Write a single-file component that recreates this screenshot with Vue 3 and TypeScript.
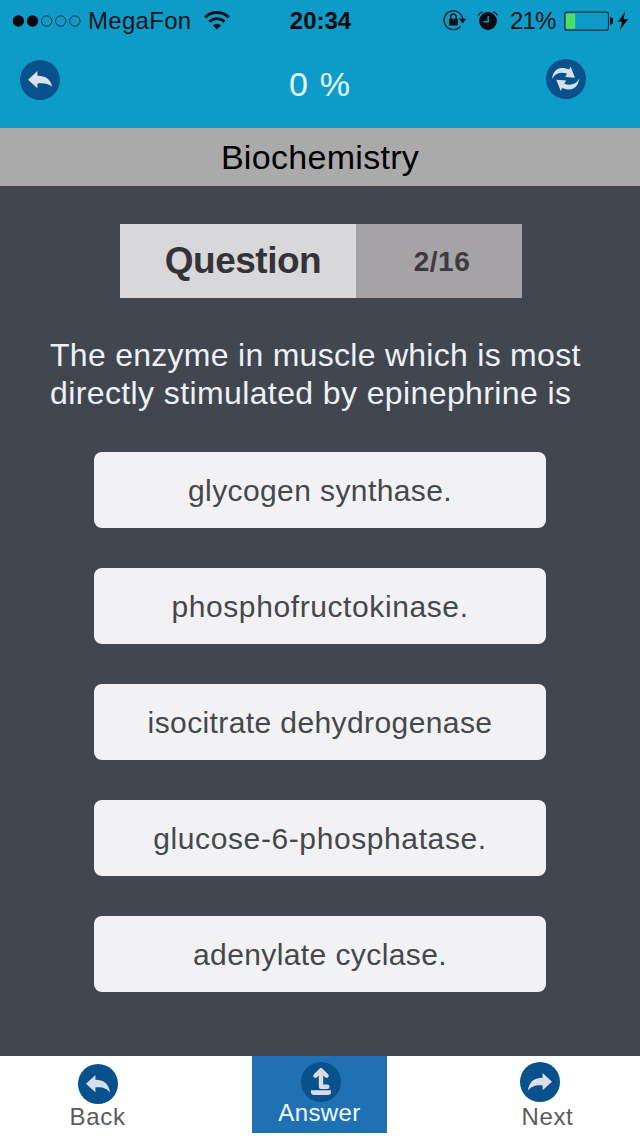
<script setup lang="ts">
interface Choice {
  text: string
  tracking: string
}

const signal: boolean[] = [true, true, false, false, false]

const choices: Choice[] = [
  { text: 'glycogen synthase.', tracking: 't-mid' },
  { text: 'phosphofructokinase.', tracking: 't-wide' },
  { text: 'isocitrate dehydrogenase', tracking: 't-mid' },
  { text: 'glucose-6-phosphatase.', tracking: 't-wide' },
  { text: 'adenylate cyclase.', tracking: 't-mid' },
]
</script>

<template>
  <div class="screen">
    <header class="top">
      <div class="status">
        <div class="status-left">
          <svg class="dots" width="70" height="14" viewBox="0 0 70 14">
            <circle
              v-for="(on, i) in signal"
              :key="i"
              :cx="6.4 + i * 14.1"
              cy="7"
              :r="on ? 5.7 : 5.2"
              :fill="on ? '#03090c' : 'none'"
              :stroke="on ? 'none' : '#052f40'"
              stroke-width="1"
            />
          </svg>
          <span class="carrier">MegaFon</span>
          <svg width="26" height="20" viewBox="0 0 26 20" fill="none" stroke="#03141b">
            <path d="M1.2 6.4A16.8 16.8 0 0 1 24.8 6.4" stroke-width="3" />
            <path d="M5.4 10.7A10.8 10.8 0 0 1 20.6 10.7" stroke-width="2.8" />
            <path d="M13 18.6L8.9 14.5A5.8 5.8 0 0 1 17.1 14.5Z" fill="#03141b" stroke="none" />
          </svg>
        </div>
        <span class="clock">20:34</span>
        <div class="status-right">
          <svg class="lock" width="24" height="22" viewBox="0 0 24 22">
            <path d="M17.6 16.2A9.4 9.4 0 1 1 19.7 9" fill="none" stroke="#042b3a" stroke-width="1.5" />
            <path d="M15.8 8.8H23.4L19.7 13.6Z" fill="#03141b" />
            <rect x="6" y="8.8" width="9" height="6.7" rx=".7" fill="#03141b" />
            <path d="M7.7 9.2V6.9a2.8 2.8 0 0 1 5.6 0V9.2" fill="none" stroke="#03141b" stroke-width="1.5" />
          </svg>
          <svg class="alarm" width="20" height="20" viewBox="0 0 20 20">
            <circle cx="10" cy="10" r="8.9" fill="#03090c" />
            <path d="M10.2 5V10.8H5.4" fill="none" stroke="#0e9ac8" stroke-width="1.5" />
            <path d="M.7 4.6Q1.6 1.7 4.7 .7M19.3 4.6Q18.4 1.7 15.3 .7" fill="none" stroke="#03141b" stroke-width="1.3" />
          </svg>
          <span class="charge">21%</span>
          <svg class="battery" width="66" height="22" viewBox="0 0 66 22">
            <rect x=".7" y="2.1" width="43.8" height="18" rx="2.2" fill="none" stroke="#063243" stroke-width="1.2" />
            <rect x="2" y="3.4" width="9.2" height="15.4" rx=".8" fill="#4fdd68" />
            <path d="M46 7.5h1.2a2 2 0 0 1 1.8 2v3a2 2 0 0 1-1.8 2H46z" fill="#03141b" />
            <path d="M61.2 1.4L54 11.8h4.1L55.8 20.2L64 9.3h-4.5z" fill="#03090c" />
          </svg>
        </div>
      </div>
      <div class="bar">
        <svg class="disc" width="40" height="40" viewBox="0 0 40 40">
          <circle cx="20" cy="20" r="20" fill="#08518c" />
          <path d="M8 19.7L17.4 11V15.8C25.5 15.8 31.2 19.7 32 26.8C28.2 23.4 23.5 23 17.4 23.5V28.2Z" fill="#dbe2eb" />
        </svg>
        <span class="percent">0 %</span>
        <svg class="disc refresh" width="40" height="40" viewBox="0 0 40 40">
          <circle cx="20" cy="20" r="20" fill="#08518c" />
          <path d="M6 19.9C7 12.5 10.8 9 16 9C18.8 9 21 9.7 23.2 10.6L24.6 7.5L29 18.8L19.2 18L21.1 14.8C14.5 12.4 9.4 13.9 6 19.9Z" fill="#d4e1eb" />
          <path d="M33.3 19.6C32.2 27 28.4 30.4 23.2 30.4C20.6 30.4 18.4 29.8 16.2 28.9L14.8 32L10.2 20.7L20.2 21.5L18.2 24.8C24.6 27.1 29.9 25.6 33.3 19.6Z" fill="#d4e1eb" />
        </svg>
      </div>
    </header>

    <div class="subject">Biochemistry</div>

    <main class="quiz">
      <div class="counter">
        <div class="counter-label">Question</div>
        <div class="counter-value">2/16</div>
      </div>
      <p class="prompt">
        <span class="line-a">The enzyme in muscle which is most</span><br />
        <span class="line-b">directly stimulated by epinephrine is</span>
      </p>
      <div class="choices">
        <button v-for="c in choices" :key="c.text" class="choice" :class="c.tracking">{{ c.text }}</button>
      </div>
    </main>

    <nav class="tabs">
      <div class="tab back">
        <svg width="40" height="40" viewBox="0 0 40 40">
          <circle cx="20" cy="20" r="20" fill="#08518c" />
          <path d="M8 19.7L17.4 11V15.8C25.5 15.8 31.2 19.7 32 28.8C28.2 23.8 23.5 23 17.4 23.5V28.2Z" fill="#d5dfeb" />
        </svg>
        <span>Back</span>
      </div>
      <div class="tab answer">
        <svg width="40" height="40" viewBox="0 0 40 40">
          <circle cx="20" cy="20" r="20" fill="#08518c" />
          <path d="M14.4 13.7L20 8.2L25.6 13.7M20 9V24.7H26.3" fill="none" stroke="#d9dce6" stroke-width="4.4" stroke-linejoin="round" stroke-linecap="round" />
          <path d="M10 28.3H30V30a3 3 0 0 1-3 3H13a3 3 0 0 1-3-3Z" fill="#d9dce6" />
        </svg>
        <span>Answer</span>
      </div>
      <div class="tab next">
        <svg width="40" height="40" viewBox="0 0 40 40">
          <circle cx="20" cy="20" r="20" fill="#08518c" />
          <path d="M32 19.7L22.6 11V15.8C14.5 15.8 8.8 19.7 8 28.8C11.8 23.8 16.5 23 22.6 23.5V28.2Z" fill="#dbe0e8" />
        </svg>
        <span>Next</span>
      </div>
    </nav>
  </div>
</template>

<style scoped>
.screen {
  width: 640px;
  height: 1136px;
  display: flex;
  flex-direction: column;
  overflow: hidden;
  background: #42474f;
  font-family: "Liberation Sans", Arial, sans-serif;
}
svg {
  display: block;
  flex: none;
}
.top {
  height: 128px;
  background: #0f9bc8;
}
.status {
  display: grid;
  grid-template-columns: 240px 161px 1fr;
  align-items: center;
  height: 41px;
  color: #03141b;
  font-size: 24px;
  line-height: 41px;
}
.status-left,
.status-right {
  display: flex;
  align-items: center;
}
.status-left {
  padding-left: 12px;
}
.carrier {
  width: 116px;
  margin-left: 6px;
  letter-spacing: 0.3px;
}
.clock {
  text-align: center;
  font-weight: bold;
  color: #03090c;
}
.status-right {
  padding-left: 42px;
}
.alarm {
  margin-left: 11px;
}
.charge {
  width: 54px;
  margin-left: 12px;
  letter-spacing: -0.8px;
}
.bar {
  height: 87px;
  display: grid;
  grid-template-columns: 100px 1fr 100px;
  align-items: start;
}
.disc {
  margin: 19px 0 0 20px;
}
.refresh {
  margin: 18px 0 0 6px;
}
.percent {
  text-align: center;
  font-size: 34px;
  line-height: 40px;
  margin-top: 23px;
  letter-spacing: 1.2px;
  color: #e2fcff;
}
.subject {
  height: 58px;
  line-height: 58px;
  background: #aaaaaa;
  color: #000;
  font-size: 34px;
  letter-spacing: 0.3px;
  text-align: center;
}
.quiz {
  height: 870px;
  display: flex;
  flex-direction: column;
}
.counter {
  width: 402px;
  height: 74px;
  margin: 38px 0 0 120px;
  display: flex;
  line-height: 74px;
  font-weight: bold;
  color: #343337;
}
.counter-label {
  width: 236px;
  box-sizing: border-box;
  padding-left: 10px;
  background: #d8d7d9;
  font-size: 37px;
  text-align: center;
  letter-spacing: -0.5px;
}
.counter-value {
  flex: 1;
  padding-left: 6px;
  background: #a5a3a5;
  color: #3e3a40;
  font-size: 28px;
  line-height: 75px;
  letter-spacing: 0.5px;
  text-align: center;
}
.prompt {
  margin: 38px 0 0 50px;
  font-size: 32px;
  line-height: 38px;
  white-space: nowrap;
  color: #edf1f8;
}
.line-a {
  letter-spacing: 0.28px;
}
.line-b {
  letter-spacing: 0.39px;
}
.choices {
  display: flex;
  flex-direction: column;
  gap: 40px;
  margin: 40px 94px 0;
}
.choice {
  height: 76px;
  padding: 2px 0 0;
  border: 0;
  border-radius: 8px;
  background: #f2f2f4;
  color: #45484b;
  font: 30px/74px "Liberation Sans", Arial, sans-serif;
  text-align: center;
}
.t-mid {
  letter-spacing: 0.4px;
}
.t-wide {
  letter-spacing: 0.6px;
}
.tabs {
  height: 80px;
  display: grid;
  grid-template-columns: 252px 135px 1fr;
  background: #fff;
}
.tab {
  display: flex;
  flex-direction: column;
  font-size: 24px;
  line-height: 28px;
  color: #5b5b5d;
}
.back {
  padding: 8px 0 0 78px;
}
.back span {
  margin: -1px 0 0 -8.5px;
  letter-spacing: 0.7px;
}
.answer {
  height: 71px;
  padding-top: 6px;
  align-items: center;
  background: #2071b3;
}
.answer svg {
  margin-left: 3px;
}
.answer span {
  margin-top: -3px;
  color: #f2fbff;
  letter-spacing: 0.4px;
}
.next {
  padding: 6px 0 0 133px;
}
.next span {
  margin: 1px 0 0 1.5px;
  letter-spacing: 0.6px;
}
</style>
